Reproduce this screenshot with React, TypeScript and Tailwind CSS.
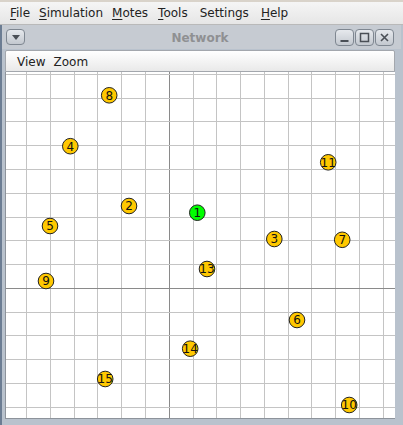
import React from "react";

const S = 23.78;
const OX = 169.3;
const OY = 288.4;

const vLines = Array.from({ length: 17 }, (_, i) => i - 7)
  .map((k) => ({ k, x: Math.floor(OX + k * S) + 0.5 }))
  .filter((l) => l.x > 7 && l.x < 395);
const hLines = Array.from({ length: 16 }, (_, i) => i - 10)
  .map((k) => ({ k, y: Math.floor(OY + k * S) + 0.5 }))
  .filter((l) => l.y > 72 && l.y < 418);

const motes = [
  { id: 8, x: 109.2, y: 95.3 },
  { id: 4, x: 70.3, y: 146.2 },
  { id: 11, x: 328.2, y: 162.3 },
  { id: 2, x: 129, y: 206 },
  { id: 1, x: 197.3, y: 212.7, green: true },
  { id: 5, x: 50, y: 226 },
  { id: 3, x: 274.3, y: 239 },
  { id: 7, x: 342.2, y: 239.8 },
  { id: 13, x: 207, y: 269 },
  { id: 9, x: 46, y: 281 },
  { id: 6, x: 297, y: 320 },
  { id: 14, x: 190.2, y: 348.7 },
  { id: 15, x: 105.2, y: 379 },
  { id: 10, x: 349.2, y: 405 },
];

function MenuItem({ label, ul = true, ml }: { label: string; ul?: boolean; ml: string }) {
  return (
    <span className={`${ml} text-[12px] leading-none text-[#222]`}>
      {ul ? (
        <>
          <span className="underline underline-offset-[2px] decoration-1">{label[0]}</span>
          {label.slice(1)}
        </>
      ) : (
        label
      )}
    </span>
  );
}

function FrameButton({ kind }: { kind: "min" | "max" | "close" }) {
  return (
    <div className="w-[19px] h-[17px] rounded-[4px] border border-[#7f8791] bg-gradient-to-b from-[#e6e9ed] to-[#c3c8cf] flex items-center justify-center">
      <svg width="11" height="11" viewBox="0 0 11 11">
        {kind === "min" && <rect x="1.5" y="8" width="8" height="2" fill="#4a4f56" />}
        {kind === "max" && (
          <rect x="1.5" y="1.5" width="8" height="8" fill="none" stroke="#4a4f56" strokeWidth="1.5" />
        )}
        {kind === "close" && (
          <path d="M2 2 L9 9 M9 2 L2 9" stroke="#4a4f56" strokeWidth="1.6" />
        )}
      </svg>
    </div>
  );
}

export default function App() {
  return (
    <div
      className="w-[403px] h-[425px] overflow-hidden flex flex-col bg-[#ebebeb]"
      style={{ fontFamily: '"DejaVu Sans", sans-serif' }}
    >
      {/* main menu bar */}
      <div className="h-[25px] shrink-0 flex items-center border-t-2 border-[#d9d3ca] bg-gradient-to-b from-[#f5f5f5] to-[#e6e6e6] border-b border-b-[#b9b9b9] pb-[1px]">
        <MenuItem label="File" ml="ml-[10px]" />
        <MenuItem label="Simulation" ml="ml-[9px]" />
        <MenuItem label="Motes" ml="ml-[9px]" />
        <MenuItem label="Tools" ml="ml-[10px]" />
        <MenuItem label="Settings" ul={false} ml="ml-[12px]" />
        <MenuItem label="Help" ml="ml-[12px]" />
      </div>

      {/* internal frame */}
      <div className="flex-1 flex flex-col bg-[#b9c2cd] shadow-[inset_2px_0_0_#6c7d93] pl-[5px] pr-[8px] pb-[6px]">
        {/* title bar */}
        <div className="h-[24px] shrink-0 flex items-center bg-[#c6cbd2] -ml-[3px] -mr-[6px] pl-[5px] pr-[8px]">
          <div className="w-[19px] h-[16px] ml-[-1px] rounded-[4px] border border-[#7f8791] bg-gradient-to-b from-[#e6e9ed] to-[#c3c8cf] flex items-center justify-center">
            <svg width="8" height="5" viewBox="0 0 8 5">
              <path d="M0 0 L8 0 L4 5 Z" fill="#4a4f56" />
            </svg>
          </div>
          <div className="flex-1 text-center text-[12px] font-bold text-[#8f9092] leading-none pl-[40px] pt-[1px]">
            Network
          </div>
          <div className="flex gap-[1px] mr-[-1px]">
            <FrameButton kind="min" />
            <FrameButton kind="max" />
            <FrameButton kind="close" />
          </div>
        </div>

        {/* view menu */}
        <div className="h-[22px] shrink-0 mt-[1px] flex items-center border border-[#a3a7ad] rounded-t-[2px] bg-gradient-to-b from-[#ffffff] to-[#e9e9e9] pt-[1px]">
          <span className="ml-[11px] text-[12px] leading-none text-[#222]">View</span>
          <span className="ml-[8px] text-[12px] leading-none text-[#222]">Zoom</span>
        </div>

        {/* canvas */}
        <div className="flex-1 bg-white border-l border-b border-[#8d939b] overflow-hidden">
          <svg width="389" height="346" viewBox="6 72 389 346" className="block">
            {vLines.map((l) => (
              <line
                key={"v" + l.k}
                x1={l.x}
                y1={72}
                x2={l.x}
                y2={420}
                stroke={l.k === 0 ? "#8a8a8a" : "#c4c4c4"}
                strokeWidth="1"
                shapeRendering="crispEdges"
              />
            ))}
            {hLines.map((l) => (
              <line
                key={"h" + l.k}
                x1={6}
                y1={l.y}
                x2={396}
                y2={l.y}
                stroke={l.k === 0 ? "#8a8a8a" : "#c4c4c4"}
                strokeWidth="1"
                shapeRendering="crispEdges"
              />
            ))}
            {motes.map((m) => (
              <g key={m.id}>
                <circle
                  cx={m.x}
                  cy={m.y}
                  r="7.8"
                  fill={m.green ? "#00ff00" : "#ffc800"}
                  stroke="#222"
                  strokeWidth="1"
                />
                <text
                  x={m.x}
                  y={m.y + 4.3}
                  textAnchor="middle"
                  fontSize="12"
                  fill="#111"
                  fontFamily='"DejaVu Sans", sans-serif'
                >
                  {m.id}
                </text>
              </g>
            ))}
          </svg>
        </div>
      </div>
    </div>
  );
}
